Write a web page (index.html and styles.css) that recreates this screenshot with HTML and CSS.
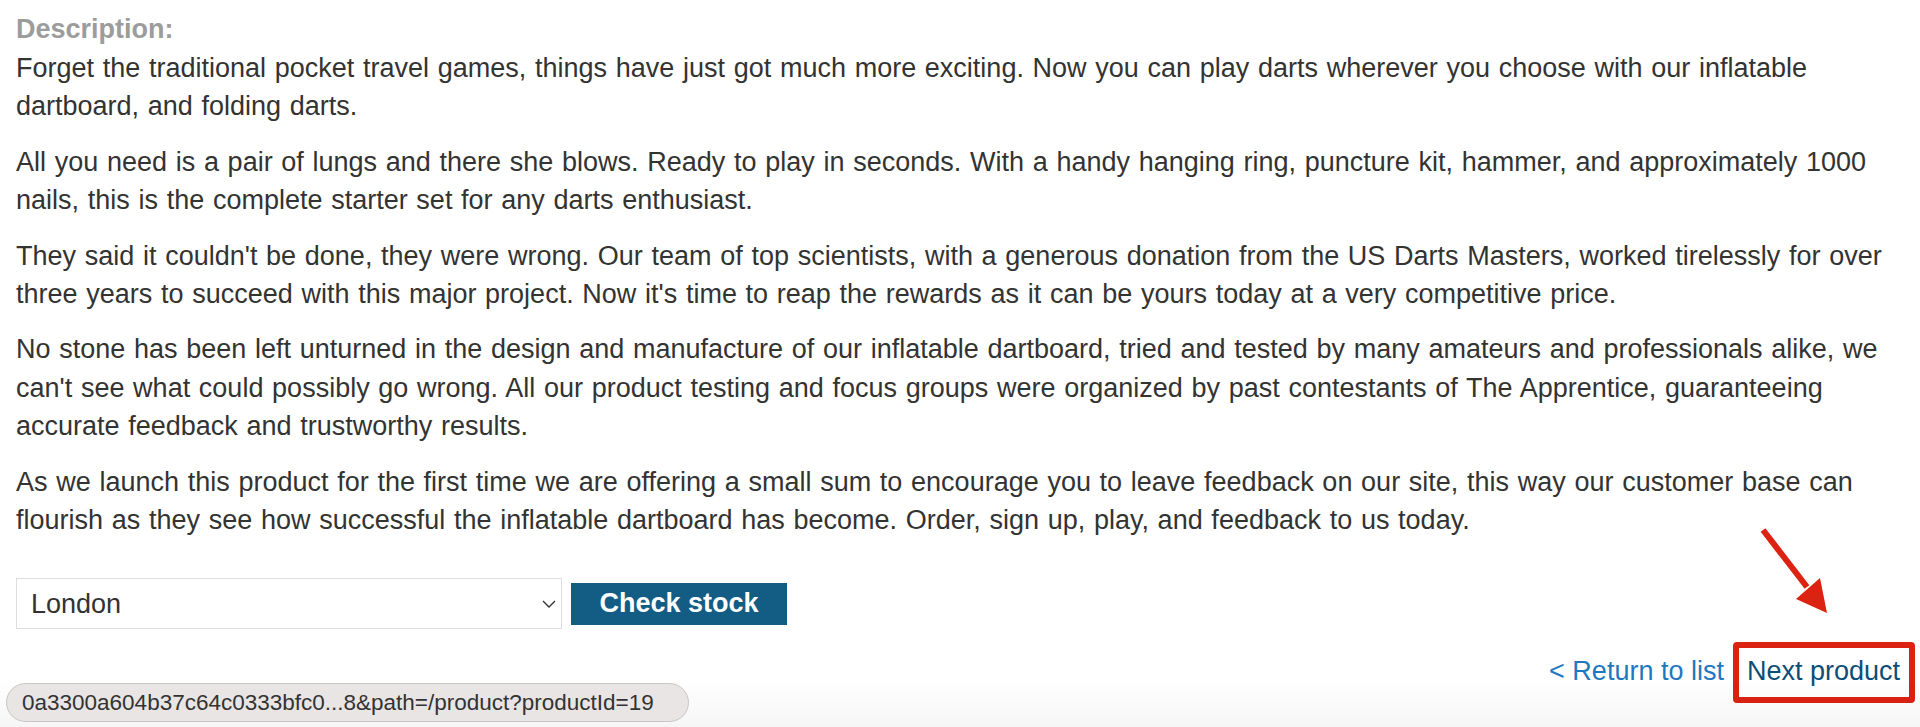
FILE: index.html
```html
<!DOCTYPE html>
<html lang="en">
<head>
    <meta charset="UTF-8">
    <meta name="viewport" content="width=device-width, initial-scale=1.0">
    <title>Inflatable Dartboard</title>
    <link rel="stylesheet" href="styles.css">
</head>
<body>
    <div class="product-page">
        <label class="desc-label">Description:</label>
        <p>Forget the traditional pocket travel games, things have just got much more exciting. Now you can play darts wherever you choose with our inflatable dartboard, and folding darts.</p>
        <p>All you need is a pair of lungs and there she blows. Ready to play in seconds. With a handy hanging ring, puncture kit, hammer, and approximately 1000 nails, this is the complete starter set for any darts enthusiast.</p>
        <p>They said it couldn't be done, they were wrong. Our team of top scientists, with a generous donation from the US Darts Masters, worked tirelessly for over three years to succeed with this major project. Now it's time to reap the rewards as it can be yours today at a very competitive price.</p>
        <p>No stone has been left unturned in the design and manufacture of our inflatable dartboard, tried and tested by many amateurs and professionals alike, we can't see what could possibly go wrong. All our product testing and focus groups were organized by past contestants of The Apprentice, guaranteeing accurate feedback and trustworthy results.</p>
        <p>As we launch this product for the first time we are offering a small sum to encourage you to leave feedback on our site, this way our customer base can flourish as they see how successful the inflatable dartboard has become. Order, sign up, play, and feedback to us today.</p>

        <form class="stock-check" onsubmit="return false">
            <div class="select-wrap">
                <select name="storeId">
                    <option value="1">London</option>
                    <option value="2">Paris</option>
                    <option value="3">Milan</option>
                </select>
                <svg class="chevron" width="14" height="8" viewBox="0 0 14 8">
                    <path d="M1 1 L7 7 L13 1" fill="none" stroke="#333" stroke-width="1.4"/>
                </svg>
            </div>
            <button type="submit" class="check-btn">Check stock</button>
        </form>

        <div class="return-links">
            <a href="#" class="return-link">&lt; Return to list</a>
            <a href="#" class="next-link">Next product<span class="mark-box"></span></a>
        </div>
    </div>

    <!-- annotation arrow -->
    <svg class="mark-arrow" width="80" height="100" viewBox="0 0 80 100">
        <line x1="8" y1="8" x2="52" y2="65" stroke="#dc2211" stroke-width="6"/>
        <polygon points="72,91 41,77 65,56" fill="#dc2211"/>
    </svg>

    <div class="bottom-fade"></div>
    <div class="status-url">0a3300a604b37c64c0333bfc0...8&amp;path=/product?productId=19</div>
</body>
</html>
```

FILE: styles.css
```css
* { box-sizing: border-box; margin: 0; padding: 0; }
body {
    font-family: "Liberation Sans", Arial, Helvetica, sans-serif;
    color: #333332;
    background: #fff;
    position: relative;
    min-height: 100vh;
}
.product-page {
    padding: 9px 16px 0 16px;
}
.desc-label {
    display: block;
    color: #9c9c9c;
    font-weight: bold;
    font-size: 27px;
    line-height: 40px;
}
.product-page p {
    font-size: 27px;
    line-height: 38.4px;
    word-spacing: 1.2px;
    margin-bottom: 17px;
}
.product-page p:last-of-type { margin-bottom: 0; }

.stock-check {
    margin-top: 39px;
    display: flex;
    align-items: center;
    gap: 9px;
}
.select-wrap {
    position: relative;
    width: 546px;
    height: 51px;
}
.select-wrap select {
    appearance: none;
    -webkit-appearance: none;
    width: 100%;
    height: 100%;
    border: 1px solid #e0dcdc;
    background: #fff;
    font-family: inherit;
    font-size: 27px;
    color: #333;
    padding: 0 40px 0 14px;
    outline: none;
}
.chevron {
    position: absolute;
    right: 6px;
    top: 22px;
    pointer-events: none;
}
.check-btn {
    width: 216px;
    height: 42px;
    background: #135c83;
    color: #fff;
    border: none;
    font-family: inherit;
    font-weight: bold;
    font-size: 27px;
    cursor: pointer;
}

.return-links {
    margin-top: 23px;
    display: flex;
    justify-content: flex-end;
    gap: 23px;
    padding-right: 4px;
    font-size: 27px;
    line-height: 38.4px;
}
.return-links a { text-decoration: none; }
.return-link { color: #1e78c0; }
.next-link {
    color: #0b4e77;
    position: relative;
}
.mark-box {
    position: absolute;
    left: -14px;
    right: -15px;
    top: -10px;
    height: 61px;
    border: 6px solid #dc2211;
    border-radius: 4px;
}
.mark-arrow {
    position: absolute;
    left: 1755px;
    top: 522px;
}

.bottom-fade {
    position: fixed;
    left: 0;
    right: 0;
    bottom: 0;
    height: 50px;
    background: linear-gradient(to bottom, rgba(0,0,0,0), rgba(0,0,0,0.035));
    pointer-events: none;
}
.status-url {
    position: fixed;
    left: 6px;
    bottom: 5px;
    width: 683px;
    height: 39px;
    padding-left: 15px;
    background: #e9e5e5;
    border: 1px solid #c9c5c5;
    border-radius: 20px;
    color: #333;
    font-size: 22.5px;
    line-height: 37px;
    white-space: nowrap;
}
```
